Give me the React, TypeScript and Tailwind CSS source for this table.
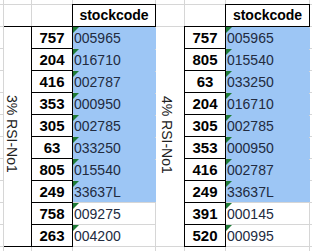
import React from 'react';

const rowStart = [
  'row-start-1', 'row-start-2', 'row-start-3', 'row-start-4', 'row-start-5', 'row-start-6', 'row-start-7',
  'row-start-8', 'row-start-9', 'row-start-10', 'row-start-11', 'row-start-12', 'row-start-13',
];
const colStart = ['col-start-1', 'col-start-2', 'col-start-3', 'col-start-4', 'col-start-5', 'col-start-6', 'col-start-7', 'col-start-8'];

const left: [string, string][] = [
  ['757', '005965'], ['204', '016710'], ['416', '002787'], ['353', '000950'], ['305', '002785'],
  ['63', '033250'], ['805', '015540'], ['249', '33637L'], ['758', '009275'], ['263', '004200'],
];
const right: [string, string][] = [
  ['757', '005965'], ['805', '015540'], ['63', '033250'], ['204', '016710'], ['305', '002785'],
  ['353', '000950'], ['416', '002787'], ['249', '33637L'], ['391', '000145'], ['520', '000995'],
];

const Blank = ({ r, c }: { r: number; c: number }) => <div className={`${rowStart[r]} ${colStart[c]} bg-white`} />;

const Flag = () => (
  <svg className="absolute left-0 top-0" width="6" height="6" viewBox="0 0 6 6">
    <polygon points="0,0 6,0 0,6" fill="#1e7a36" />
  </svg>
);

const NumCell = ({ r, c, v }: { r: number; c: number; v: string }) => (
  <div className={`${rowStart[r]} ${colStart[c]} bg-white outline outline-black text-center font-bold text-black text-[15px] pt-px leading-[20px]`}>
    {v}
  </div>
);

const CodeCell = ({ r, c, v, i }: { r: number; c: number; v: string; i: number }) => {
  const fill = i < 7 ? 'bg-[#9dc6f5] shadow-[1px_1px_0_0_#9dc6f5]' : i === 7 ? 'bg-[#9dc6f5] shadow-[1px_0_0_0_#9dc6f5]' : 'bg-white';
  return (
    <div className={`${rowStart[r]} ${colStart[c]} ${fill} relative text-[#222b3f] pl-px pt-[2px] leading-[19px]`}>
      <Flag />
      {v}
    </div>
  );
};

export default function App() {
  const cells: React.ReactNode[] = [];

  // top partial row
  for (let c = 0; c < 8; c++) cells.push(<Blank key={`t${c}`} r={0} c={c} />);

  // header row
  [0, 1, 2, 4, 5, 7].forEach((c) => cells.push(<Blank key={`h${c}`} r={1} c={c} />));
  cells.push(
    <div key="h3" className="row-start-2 col-start-4 bg-white outline outline-black text-center font-bold text-black pt-px leading-[19px]">
      stockcode
    </div>,
    <div key="h6" className="row-start-2 col-start-7 bg-white outline outline-black text-center font-bold text-black pt-px leading-[19px]">
      stockcode
    </div>,
  );

  // data rows
  left.forEach(([n, code], i) => {
    const r = i + 2;
    cells.push(<Blank key={`a${i}`} r={r} c={0} />);
    cells.push(<NumCell key={`ln${i}`} r={r} c={2} v={n} />);
    cells.push(<CodeCell key={`lc${i}`} r={r} c={3} v={code} i={i} />);
    cells.push(<NumCell key={`rn${i}`} r={r} c={5} v={right[i][0]} />);
    cells.push(<CodeCell key={`rc${i}`} r={r} c={6} v={right[i][1]} i={i} />);
    cells.push(<Blank key={`z${i}`} r={r} c={7} />);
  });

  // merged labels
  cells.push(
    <div
      key="lab1"
      className="row-start-3 row-span-10 col-start-2 bg-white shadow-[0_-1px_0_0_#000,0_1px_0_0_#000] flex items-center justify-start pb-[5px]"
    >
      <span className="[writing-mode:vertical-rl] leading-[16px] text-[#222]">3% RSI-No1</span>
    </div>,
    <div key="lab2" className="row-start-3 row-span-10 col-start-5 bg-white flex items-center justify-start pl-[3px] pb-[4px]">
      <span className="[writing-mode:vertical-rl] leading-[16px] text-[#222]">4% RSI-No1</span>
    </div>,
  );

  // bottom partial row
  for (let c = 0; c < 8; c++) cells.push(<Blank key={`b${c}`} r={12} c={c} />);

  return (
    <div className="w-[312px] h-[251px] overflow-hidden bg-white font-['Liberation_Sans',Arial,sans-serif] text-[14px]">
      <div className="grid grid-cols-[3px_27px_40px_82px_28px_40px_83px_20px] grid-rows-[4px_repeat(11,21px)_10px] gap-px bg-[#d6d6d6] w-max">
        {cells}
      </div>
    </div>
  );
}
